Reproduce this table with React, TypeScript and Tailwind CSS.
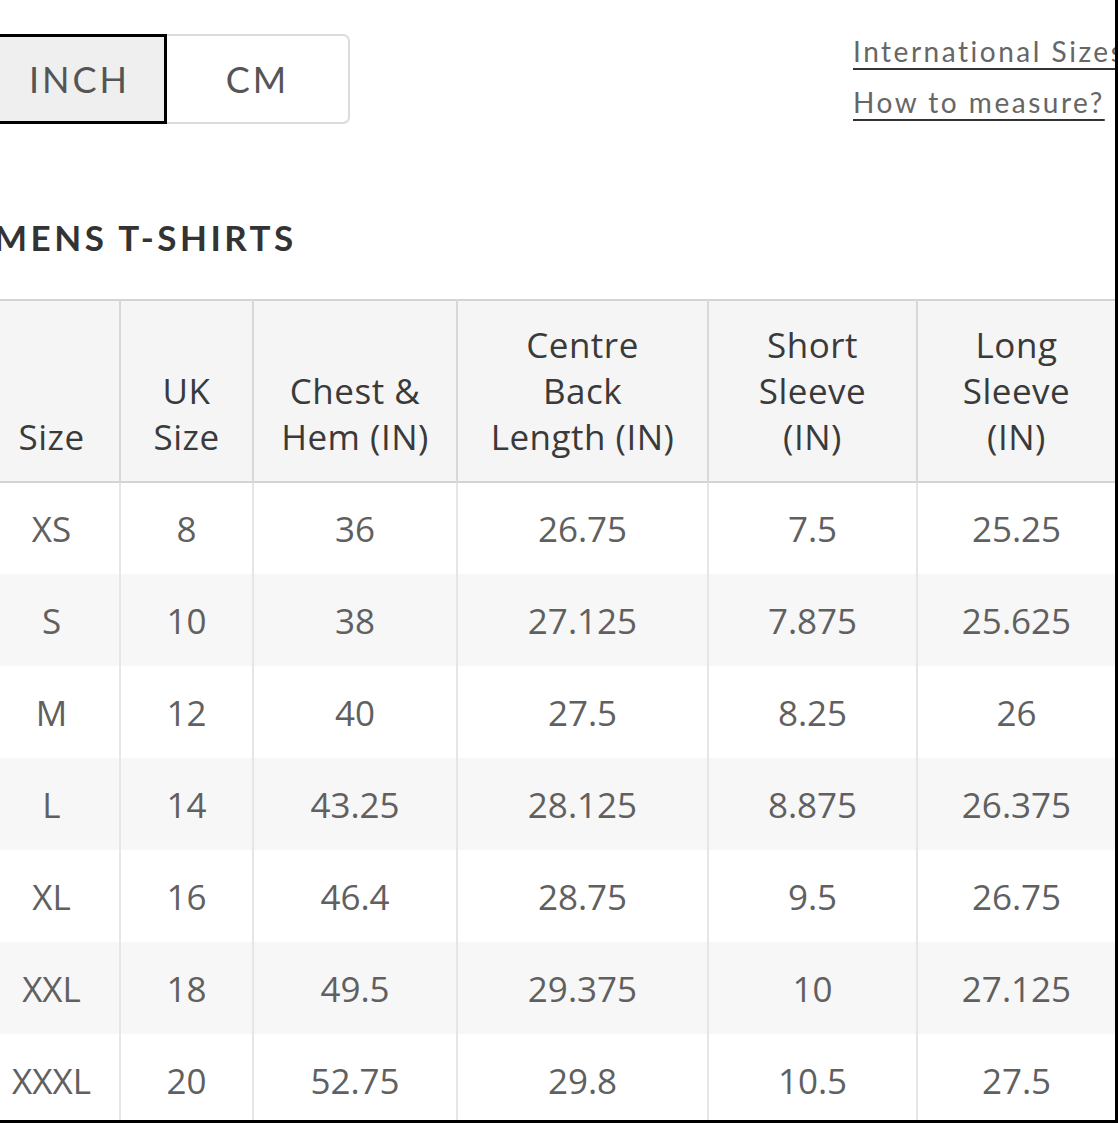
const rows = [
  ['XS', '8', '36', '26.75', '7.5', '25.25'],
  ['S', '10', '38', '27.125', '7.875', '25.625'],
  ['M', '12', '40', '27.5', '8.25', '26'],
  ['L', '14', '43.25', '28.125', '8.875', '26.375'],
  ['XL', '16', '46.4', '28.75', '9.5', '26.75'],
  ['XXL', '18', '49.5', '29.375', '10', '27.125'],
  ['XXXL', '20', '52.75', '29.8', '10.5', '27.5'],
];

const headers = [
  ['Size'],
  ['UK', 'Size'],
  ['Chest &', 'Hem (IN)'],
  ['Centre', 'Back', 'Length (IN)'],
  ['Short', 'Sleeve', '(IN)'],
  ['Long', 'Sleeve', '(IN)'],
];

export default function App() {
  return (
    <div className="w-[1118px] h-[1123px] overflow-hidden bg-white border-r-[3px] border-b-[3px] border-black">
      <div className="pt-[34px]">
        {/* unit toggle + links */}
        <div className="flex items-start ml-[-8px] font-['Lato',sans-serif]">
          <div className="flex h-[90px]">
            <button className="w-[175px] h-full bg-[#efefef] border-[3px] border-black text-[36px] tracking-[3px] text-[#555] leading-none">
              INCH
            </button>
            <button className="w-[183px] h-full bg-white border-2 border-l-0 border-[#dcdcdc] rounded-r-[7px] text-[36px] tracking-[3px] text-[#555] leading-none">
              CM
            </button>
          </div>
          <div className="ml-[503px] mt-[-8px] flex flex-col whitespace-nowrap text-[28px] leading-[51px] tracking-[0.09em] text-[#666]">
            <a className="underline decoration-2 decoration-[#333] underline-offset-[6px]">International Sizes</a>
            <a className="underline decoration-2 decoration-[#333] underline-offset-[6px]">How to measure?</a>
          </div>
        </div>

        <h2 className="mt-[92px] ml-[-6px] font-['Lato',sans-serif] font-bold text-[35px] leading-none tracking-[0.1em] text-[#333] whitespace-nowrap">
          MENS T-SHIRTS
        </h2>

        <table className="mt-[44px] ml-[-16px] w-[1131px] table-fixed border-collapse font-['Open_Sans',sans-serif] text-[35px]">
          <colgroup>
            <col className="w-[136px]" />
            <col className="w-[133px]" />
            <col className="w-[204px]" />
            <col className="w-[251px]" />
            <col className="w-[209px]" />
            <col className="w-[198px]" />
          </colgroup>
          <thead>
            <tr className="bg-[#f5f5f5] border-t-2 border-b-2 border-[#d4d4d4] h-[182px]">
              {headers.map((h, i) => (
                <th
                  key={i}
                  className="align-bottom pb-[21px] font-normal leading-[46px] tracking-[0.5px] text-[#3a3a3a] border-l-2 border-[#d8d8d8] first:border-l-0"
                >
                  {h.map((line) => (
                    <div key={line}>{line}</div>
                  ))}
                </th>
              ))}
            </tr>
          </thead>
          <tbody>
            {rows.map((r, ri) => (
              <tr key={r[0]} className={ri % 2 === 1 ? 'bg-[#f7f7f7] h-[92px]' : 'bg-white h-[92px]'}>
                {r.map((c, ci) => (
                  <td
                    key={ci}
                    className="text-center align-middle leading-none text-[#606060] border-l-2 border-[#e6e6e6] first:border-l-0"
                  >
                    {c}
                  </td>
                ))}
              </tr>
            ))}
          </tbody>
        </table>
      </div>
    </div>
  );
}
